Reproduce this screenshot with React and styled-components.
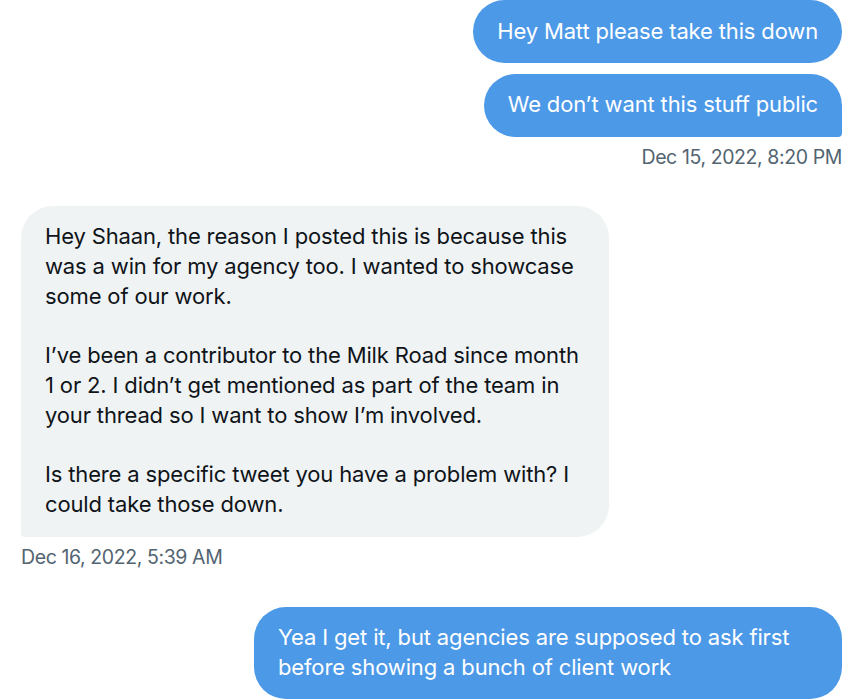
import React from "react";
import styled, { createGlobalStyle } from "styled-components";

const GlobalStyle = createGlobalStyle`
  html, body {
    margin: 0;
    padding: 0;
    background: #ffffff;
    overflow: hidden;
  }
  body {
    font-family: Inter, "Noto Sans", "Liberation Sans", sans-serif;
    -webkit-font-smoothing: antialiased;
  }
`;

const Thread = styled.div`
  display: flex;
  flex-direction: column;
  padding: 0 12px 0 21px;
  width: 854px;
  box-sizing: border-box;
`;

const Group = styled.div`
  display: flex;
  flex-direction: column;
  align-items: ${(p) => (p.$sent ? "flex-end" : "flex-start")};
  gap: 11px;
  margin-top: ${(p) => p.$offset || 0}px;
`;

const Bubble = styled.div`
  box-sizing: border-box;
  max-width: 588px;
  padding: 16.5px 24px;
  font-size: 22px;
  line-height: 29.8px;
  letter-spacing: -0.15px;
  white-space: pre-line;
  border-radius: 32px;
  background: ${(p) => (p.$sent ? "#4c99e8" : "#eff3f4")};
  color: ${(p) => (p.$sent ? "#ffffff" : "#0f1419")};
  ${(p) =>
    p.$tail &&
    (p.$sent
      ? "border-bottom-right-radius: 4px;"
      : "border-bottom-left-radius: 4px;")}
`;

const Stamp = styled.div`
  font-size: 19.5px;
  line-height: 24px;
  color: #536471;
  letter-spacing: -0.4px;
  margin-top: -3px;
`;

const messages = [
  {
    sent: true,
    items: ["Hey Matt please take this down", "We don’t want this stuff public"],
    time: "Dec 15, 2022, 8:20 PM",
    offset: 0,
  },
  {
    sent: false,
    items: [
      "Hey Shaan, the reason I posted this is because this was a win for my agency too. I wanted to showcase some of our work.\n\nI’ve been a contributor to the Milk Road since month 1 or 2. I didn’t get mentioned as part of the team in your thread so I want to show I’m involved.\n\nIs there a specific tweet you have a problem with? I could take those down.",
    ],
    time: "Dec 16, 2022, 5:39 AM",
    offset: 37,
  },
  {
    sent: true,
    items: [
      "Yea I get it, but agencies are supposed to ask first before showing a bunch of client work",
    ],
    offset: 38,
  },
];

export default function App() {
  return (
    <>
      <GlobalStyle />
      <Thread>
        {messages.map((m, i) => (
          <Group key={i} $sent={m.sent} $offset={m.offset}>
            {m.items.map((text, j) => (
              <Bubble
                key={j}
                $sent={m.sent}
                $tail={j === m.items.length - 1 && !!m.time}
              >
                {text}
              </Bubble>
            ))}
            {m.time && <Stamp>{m.time}</Stamp>}
          </Group>
        ))}
      </Thread>
    </>
  );
}
